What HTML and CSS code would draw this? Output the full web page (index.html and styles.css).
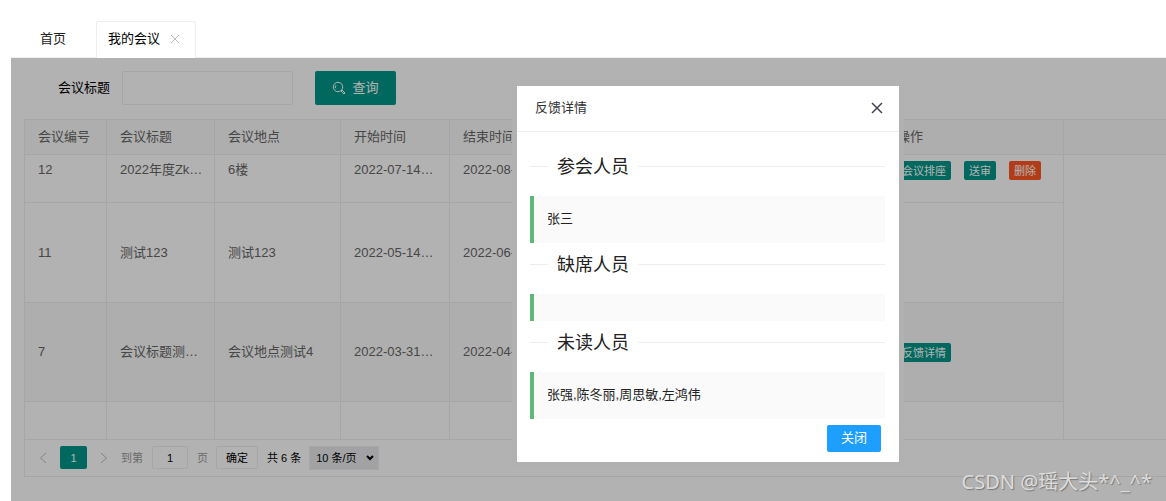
FILE: index.html
```html
<!DOCTYPE html>
<html lang="zh-CN">
<head>
<meta charset="utf-8">
<title>我的会议</title>
<link rel="stylesheet" href="styles.css">
</head>
<body>
<nav class="tabs">
  <a class="tab" href="#home">首页</a>
  <div class="tab tab-active">
    <a href="#meetings">我的会议</a>
    <button class="tab-close" type="button" aria-label="关闭标签"><svg width="10" height="10" viewBox="0 0 10 10"><path d="M1 1l8 8M9 1l-8 8"/></svg></button>
  </div>
</nav>
<main class="content">
  <form class="search">
    <label for="title">会议标题</label>
    <input id="title" type="text">
    <button class="btn-search" type="button"><svg width="14" height="14" viewBox="0 0 14 14"><circle cx="6" cy="6" r="4.7"/><path d="M3.6 7.2a2.8 2.8 0 0 1 .3-3M9 10l1-1 3 3-1 1z"/></svg>查询</button>
  </form>
  <section class="grid">
    <div class="grid-scroll">
      <table>
        <colgroup><col class="c-id"><col class="c-title"><col class="c-place"><col class="c-time"><col class="c-time"><col class="c-state"><col class="c-ops"><col></colgroup>
        <thead>
          <tr><th>会议编号</th><th>会议标题</th><th>会议地点</th><th>开始时间</th><th>结束时间</th><th></th><th>操作</th><th></th></tr>
        </thead>
        <tbody>
          <tr class="row-short"><td>12</td><td>2022年度Zk…</td><td>6楼</td><td>2022-07-14…</td><td>2022-08-…</td><td></td><td><div class="ops"><button type="button">会议排座</button><button type="button">送审</button><button class="danger" type="button">删除</button></div></td><td></td></tr>
          <tr class="row-tall"><td>11</td><td>测试123</td><td>测试123</td><td>2022-05-14…</td><td>2022-06-…</td><td></td><td></td><td></td></tr>
          <tr class="row-tall row-alt"><td>7</td><td>会议标题测…</td><td>会议地点测试4</td><td>2022-03-31…</td><td>2022-04-…</td><td></td><td><div class="ops"><button type="button">反馈详情</button></div></td><td></td></tr>
          <tr class="row-tall"><td></td><td></td><td></td><td></td><td></td><td></td><td></td><td></td></tr>
        </tbody>
      </table>
    </div>
    <div class="pager">
      <button class="arrow" type="button" aria-label="上一页"><svg width="8" height="12" viewBox="0 0 8 12"><path d="M7 1L1.500 6 7 11"/></svg></button>
      <button class="current" type="button">1</button>
      <button class="arrow" type="button" aria-label="下一页"><svg width="8" height="12" viewBox="0 0 8 12"><path d="M1 1l5.500 5L1 11"/></svg></button>
      <label class="skip" for="page">到第</label>
      <input id="page" type="text" value="1">
      <span class="unit">页</span>
      <button class="go" type="button">确定</button>
      <span class="total">共 6 条</span>
      <span class="limit"><select aria-label="每页条数"><option>10 条/页</option></select><svg width="8" height="6" viewBox="0 0 8 6"><path d="M1 1l3 3 3-3"/></svg></span>
    </div>
  </section>
  <div class="shade"></div>
  <section class="modal" role="dialog" aria-labelledby="modal-title">
    <header>
      <h1 id="modal-title">反馈详情</h1>
      <button class="modal-close" type="button" aria-label="关闭"><svg width="12" height="12" viewBox="0 0 12 12"><path d="M1 1l10 10M11 1L1 11"/></svg></button>
    </header>
    <div class="modal-body">
      <fieldset><legend>参会人员</legend></fieldset>
      <blockquote>张三</blockquote>
      <fieldset><legend>缺席人员</legend></fieldset>
      <blockquote></blockquote>
      <fieldset><legend>未读人员</legend></fieldset>
      <blockquote>张强,陈冬丽,周思敏,左鸿伟</blockquote>
      <footer><button class="btn-close" type="button">关闭</button></footer>
    </div>
  </section>
  <div class="watermark">CSDN @瑶大头*^_^*</div>
</main>
</body>
</html>
```
FILE: styles.css
```css
* { box-sizing: border-box; }

body {
  margin: 0;
  padding-left: 11px;
  min-height: 100vh;
  display: flex;
  flex-direction: column;
  background: #fff;
  color: #000;
  font: 13px/20px "Liberation Sans", "Noto Sans CJK SC", sans-serif;
}

button, input, select { font: inherit; color: inherit; margin: 0; }
button { border: 0; padding: 0; background: none; cursor: pointer; }
a { color: inherit; text-decoration: none; }
svg { fill: none; stroke: currentColor; flex: none; }

/* Tabs */
.tabs {
  display: flex;
  align-items: flex-end;
  padding: 21px 0 0 17px;
  height: 58px;
  box-shadow: inset 0 -1px #eee;
}
.tab {
  display: flex;
  align-items: center;
  height: 37px;
  padding: 0 12px 2px;
  margin-right: 18px;
  color: #222;
}
.tab-active {
  width: 100px;
  gap: 10px;
  padding: 0 11px 2px;
  margin: 0;
  border: 1px solid #eee;
  border-bottom: 0;
  border-radius: 2px 2px 0 0;
  background: #fff;
  color: #000;
  white-space: nowrap;
}
.tab-close { display: flex; color: #bbb; }

.content {
  position: relative;
  flex: 1;
  padding: 13px 0 0 13px;
  overflow: hidden;
}

/* Search form */
.search { display: flex; align-items: center; margin-bottom: 14px; }
.search label { width: 98px; padding-right: 12px; text-align: right; }
.search input {
  width: 171px;
  height: 34px;
  padding: 0 10px;
  border: 1px solid #eee;
  border-radius: 2px;
  background: #fff;
}
.btn-search {
  display: flex;
  align-items: center;
  justify-content: center;
  gap: 6px;
  width: 81px;
  height: 34px;
  margin-left: 22px;
  border-radius: 2px;
  background: #009688;
  color: #fff;
}

/* Meeting table */
.grid { border: 1px solid #eee; border-right: 0; }
.grid-scroll { height: 320px; overflow: hidden; border-bottom: 1px solid #eee; }
table { width: 100%; table-layout: fixed; border-collapse: separate; border-spacing: 0; color: #666; }
.c-id { width: 82px; }
.c-title { width: 108px; }
.c-place { width: 126px; }
.c-time { width: 109px; }
.c-state { width: 325px; }
.c-ops { width: 180px; }
th, td {
  padding: 0 13px;
  border: solid #eee;
  border-width: 0 1px 1px 0;
  font-weight: 400;
  text-align: left;
  white-space: nowrap;
}
th { height: 35px; background: #fafafa; }
th:last-child { border-right: 0; }
td:last-child { border: 0; background: #fff; }
.row-short td { height: 48px; padding-top: 5px; vertical-align: top; }
.row-tall td { height: 100px; }
.row-alt td { height: 99px; }
.row-alt td:not(:last-child) { background: #fafafa; }
.ops { display: flex; gap: 13px; }
.ops button {
  height: 19px;
  padding: 1px 5px 0;
  margin-top: 1px;
  border-radius: 2px;
  background: #009688;
  color: #fff;
  font-size: 11px;
  line-height: 18px;
}
.ops .danger { background: #ff5722; }

/* Pagination */
.pager {
  display: flex;
  align-items: center;
  height: 36px;
  padding: 0 0 1px 14px;
  font-size: 11px;
  white-space: nowrap;
}
.arrow { display: flex; color: #bbb; }
.current {
  width: 27px;
  height: 23px;
  margin: 0 13px;
  border-radius: 2px;
  background: #009688;
  color: #fff;
}
.skip { margin-left: 13px; color: #999; }
.pager input {
  width: 36px;
  height: 23px;
  margin: 0 9px;
  padding: 0;
  border: 1px solid #eee;
  border-radius: 2px;
  background: #fff;
  text-align: center;
}
.unit { color: #999; }
.go {
  width: 42px;
  height: 23px;
  margin: 0 9px 0 8px;
  border: 1px solid #eee;
  border-radius: 2px;
}
.limit { display: grid; align-items: center; margin-left: 8px; }
.limit select {
  grid-area: 1 / 1;
  appearance: none;
  width: 70px;
  height: 24px;
  padding: 0 6px;
  border: 1px solid #eee;
  border-radius: 0;
  background: #e9e9ed;
}
.limit svg { grid-area: 1 / 1; justify-self: end; margin-right: 5px; stroke-width: 2; pointer-events: none; }

/* Dialog */
.shade { position: absolute; inset: 0; background: rgba(0, 0, 0, .3); }
.modal {
  position: absolute;
  top: 23px;
  left: 501px;
  width: 392px;
  border: 5px solid #b1b1b1;
  border-radius: 4px;
  background: #fff;
  color: #222;
}
.modal header {
  display: flex;
  align-items: center;
  justify-content: space-between;
  height: 46px;
  padding: 0 16px 2px 18px;
  border-bottom: 1px solid #eee;
}
.modal h1 { margin: 0; font-size: 13px; font-weight: 400; color: #333; }
.modal-close { display: flex; color: #445; }
.modal-close svg { stroke-width: 1.5; }
.modal-body { padding: 20px 14px 10px 13px; }
fieldset { margin: 0; padding: 0 0 16px; border: 0; border-top: 1px solid #eee; }
legend { margin-left: 18px; padding: 2px 9px 0; font-size: 18px; line-height: 26px; }
blockquote {
  min-height: 27px;
  margin: 0 0 7px;
  padding: 12px 13px 14px;
  border-left: 4px solid #5fb878;
  border-radius: 0 2px 2px 0;
  background: #fafafa;
  line-height: 21px;
}
blockquote:empty { padding: 0; }
blockquote:last-of-type { margin-bottom: 6px; }
.modal footer { display: flex; justify-content: flex-end; padding-right: 4px; }
.btn-close {
  width: 54px;
  height: 27px;
  padding-bottom: 2px;
  border-radius: 2px;
  background: #1e9fff;
  color: #fff;
}

.watermark {
  position: absolute;
  right: 14px;
  bottom: 5px;
  color: #dcdcdc;
  font: 20px/28px "Noto Sans", "Noto Sans CJK SC", sans-serif;
  text-shadow: 1px 1px 1px #777;
}
```
